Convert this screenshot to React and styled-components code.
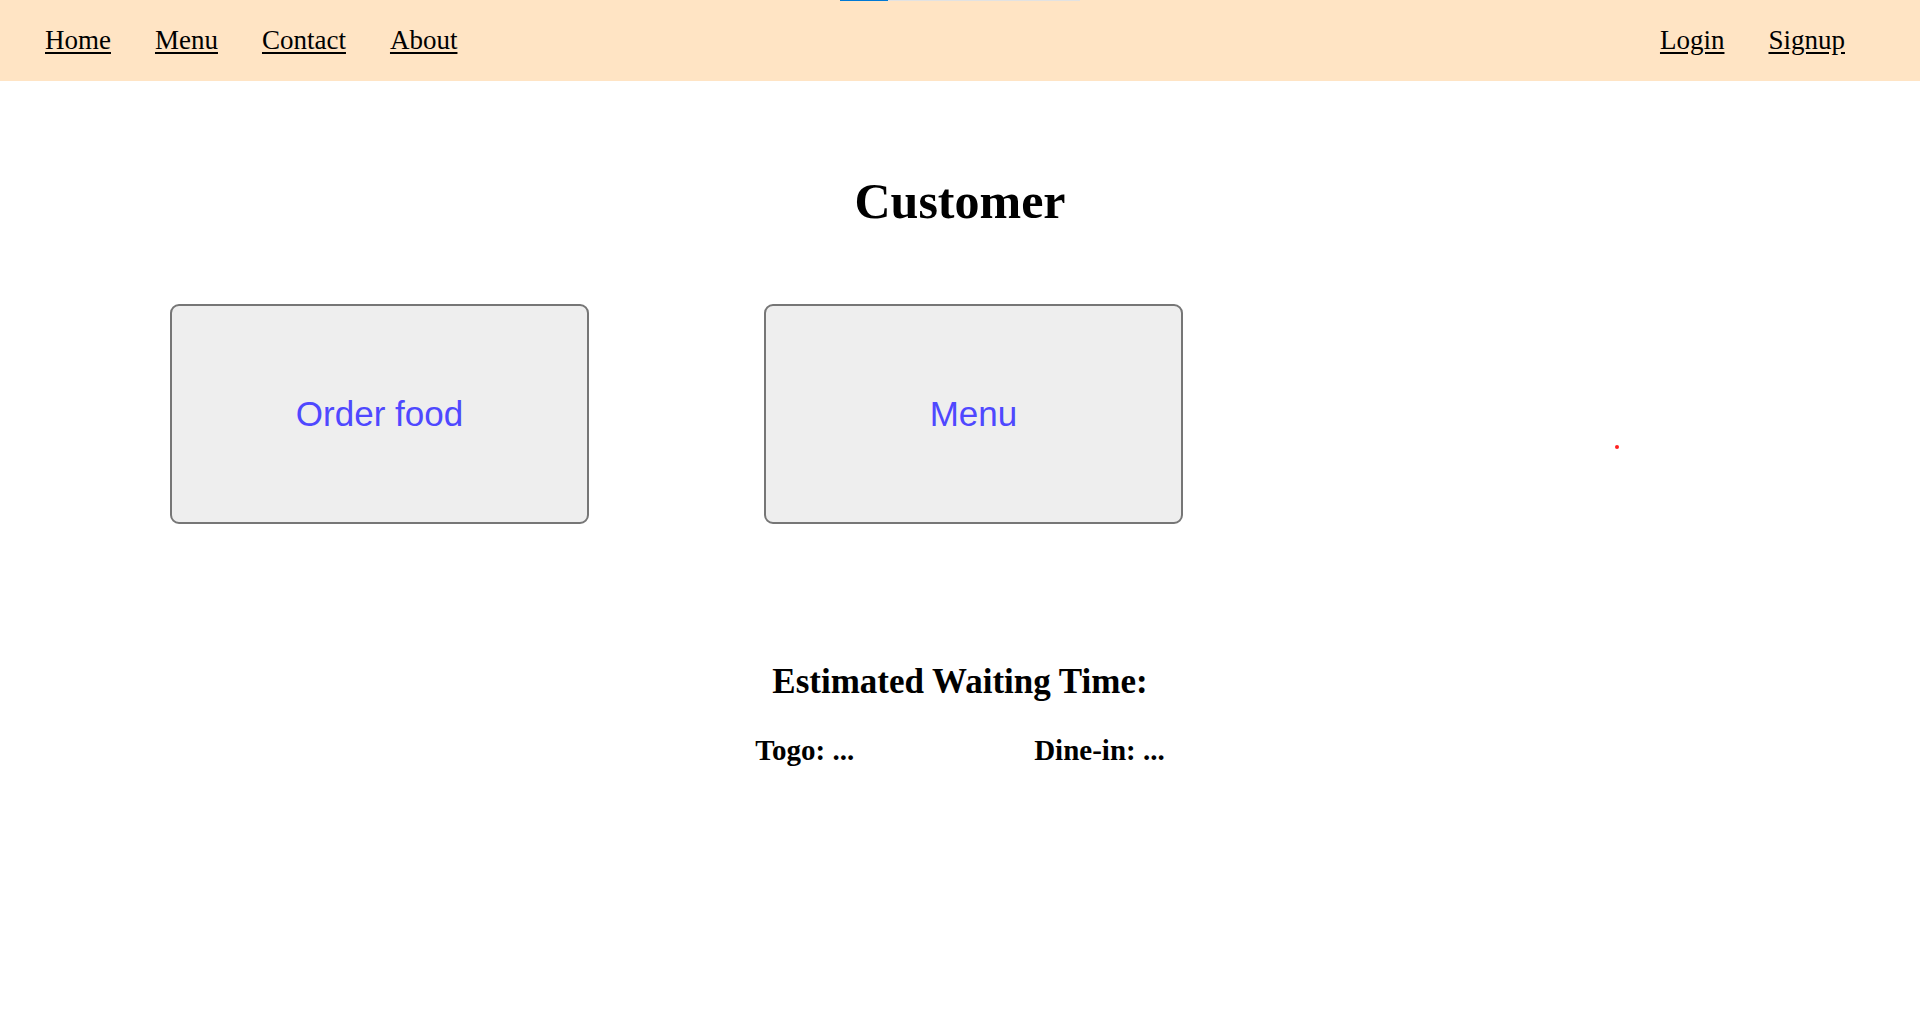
import React from "react";
import styled, { createGlobalStyle } from "styled-components";

const Global = createGlobalStyle`
  html, body { margin: 0; padding: 0; background: #fff; }
  body { font-family: "Liberation Serif", "Times New Roman", serif; color: #000; }
`;

const Page = styled.div`
  position: relative;
  min-height: 1036px;
`;

const Progress = styled.div`
  position: absolute;
  top: 0;
  left: 840px;
  width: 240px;
  height: 1px;
  background: #e2e2e2;
  z-index: 2;
`;

const ProgressFill = styled.div`
  height: 100%;
  background: #0078d4;
`;

const NavBar = styled.nav`
  height: 81px;
  background: #ffe4c4;
  display: flex;
  align-items: center;
  justify-content: space-between;
  padding: 0 75px 0 45px;
`;

const NavGroup = styled.div`
  display: flex;
  gap: 44px;
`;

const NavLink = styled.a`
  font-family: "Liberation Serif", "Times New Roman", serif;
  font-size: 27px;
  color: #000;
  text-decoration: underline;
  text-underline-offset: 3px;
  cursor: pointer;
`;

const Title = styled.h1`
  margin: 91px 0 0;
  text-align: center;
  font-size: 50px;
  font-weight: bold;
  line-height: normal;
`;

const TileRow = styled.div`
  display: flex;
  align-items: flex-start;
  gap: 175px;
  margin-top: 74px;
  padding-left: 170px;
`;

const Tile = styled.button`
  box-sizing: border-box;
  width: 419px;
  height: 220px;
  background: #eeeeee;
  border: 2px solid #767676;
  border-radius: 9px;
  display: flex;
  align-items: center;
  justify-content: center;
  font-family: "Liberation Sans", Arial, sans-serif;
  font-size: 35px;
  color: #4f48ff;
  cursor: pointer;
  padding: 0;
`;

const Dot = styled.span`
  width: 4px;
  height: 4px;
  border-radius: 50%;
  background: #ff2020;
  margin-top: 141px;
  margin-left: 257px;
`;

const WaitTitle = styled.h2`
  margin: 138px 0 0;
  text-align: center;
  font-size: 35px;
  font-weight: bold;
  line-height: normal;
`;

const WaitRow = styled.div`
  display: flex;
  justify-content: center;
  gap: 180px;
  margin-top: 32px;
`;

const WaitItem = styled.h3`
  margin: 0;
  font-size: 29px;
  font-weight: bold;
  line-height: normal;
`;

export default function App() {
  return (
    <Page>
      <Global />
      <Progress>
        <ProgressFill style={{ width: "20%" }} />
      </Progress>
      <NavBar>
        <NavGroup>
          <NavLink>Home</NavLink>
          <NavLink>Menu</NavLink>
          <NavLink>Contact</NavLink>
          <NavLink>About</NavLink>
        </NavGroup>
        <NavGroup>
          <NavLink>Login</NavLink>
          <NavLink>Signup</NavLink>
        </NavGroup>
      </NavBar>
      <Title>Customer</Title>
      <TileRow>
        <Tile>Order food</Tile>
        <Tile>Menu</Tile>
        <Dot />
      </TileRow>
      <WaitTitle>Estimated Waiting Time:</WaitTitle>
      <WaitRow>
        <WaitItem>Togo: ...</WaitItem>
        <WaitItem>Dine-in: ...</WaitItem>
      </WaitRow>
    </Page>
  );
}
